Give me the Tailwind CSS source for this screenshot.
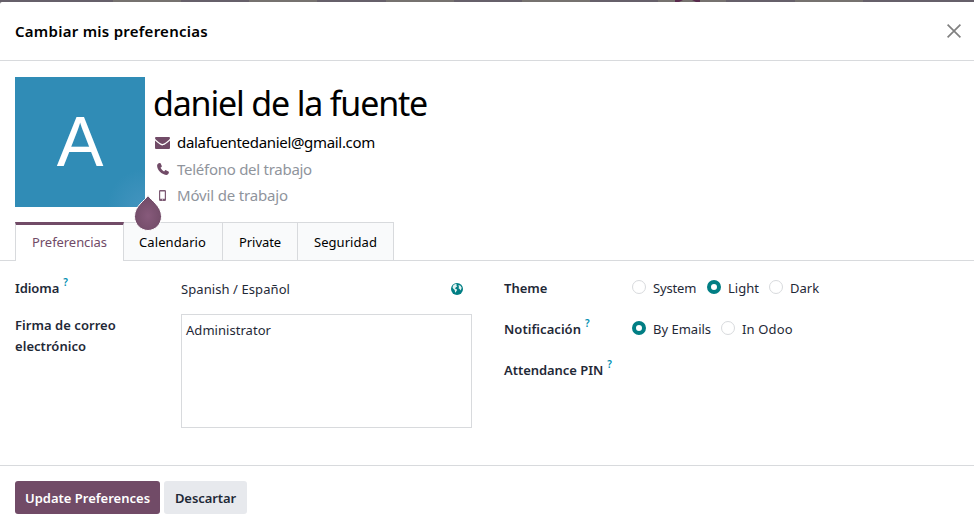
<!DOCTYPE html>
<html lang="es">
<head>
<meta charset="utf-8">
<title>Cambiar mis preferencias</title>
<script src="https://cdn.jsdelivr.net/npm/@tailwindcss/browser@4"></script>
</head>
<body class="w-[974px] h-[528px] overflow-hidden bg-[#66626a] font-['Noto_Sans','Open_Sans',sans-serif] text-[13px] leading-[21px] text-[#1f2937]">
<!-- Dimmed backdrop behind the dialog -->
<div class="flex h-0.5 bg-[#66606a]">
  <div class="w-[113px]"></div><div class="w-[68px] bg-[#76726f]"></div>
  <div class="w-[68px]"></div><div class="w-[68px] bg-[#76726f]"></div>
  <div class="w-[69px]"></div><div class="w-[68px] bg-[#76726f]"></div>
  <div class="w-[68px]"></div><div class="w-[68px] bg-[#76726f]"></div>
  <div class="w-[68px]"></div>
  <div class="w-[68px] bg-[#76726f] flex justify-center pr-[9px]"><svg class="w-[25px] h-0.5" viewBox="0 0 25 2"><path d="M0 2V0H8L4 2ZM25 2V0H17L21 2Z" fill="#592a4d"/></svg></div>
  <div class="w-[69px]"></div><div class="w-[68px] bg-[#76726f]"></div>
</div>
<div class="flex flex-col h-[526px] bg-white rounded-tl-[2px]">
  <header class="flex h-[59px] shrink-0 items-center justify-between border-b border-[#d8dadd] pl-[15px] pr-[13px]">
    <h1 class="text-[15px] font-semibold tracking-[0.26px] text-black">Cambiar mis preferencias</h1>
    <svg class="w-[14px] h-[14px]" viewBox="0 0 14 14" fill="none" stroke="#808080" stroke-width="1.7"><path d="M.6.6 13.4 13.4M13.4.6.6 13.4"/></svg>
  </header>

  <main class="flex-1">
    <section class="flex h-[161px] pl-[15px] pt-4">
      <div class="relative flex w-[130px] h-[130px] items-center justify-center bg-[radial-gradient(circle_at_bottom_right,#4494bf_0,#308cb6_38px)] shrink-0">
        <span class="text-[70px] leading-[130px] text-white font-['Liberation_Sans','Noto_Sans',sans-serif]">A</span>
        <svg class="absolute left-[118px] top-[117px] w-[30px] h-[38px] z-10" viewBox="0 0 30 38">
          <defs><radialGradient id="drop" cx=".5" cy=".58" r=".55"><stop stop-color="#875a7b"/><stop offset="1" stop-color="#714b67"/></radialGradient></defs>
          <path d="M15 1.500C18 6.500 28.500 12 28.500 22.500C28.500 30.500 22 36.500 15 36.500S1.500 30.500 1.500 22.500C1.500 12 12 6.500 15 1.500Z" fill="url(#drop)" stroke="#fff" stroke-width="1"/>
        </svg>
      </div>
      <div class="pl-[8px] text-[15px]">
        <div class="h-[52px] text-[34px] leading-[53px] tracking-[-1.18px] text-black whitespace-nowrap">daniel de la fuente</div>
        <div class="flex h-[27px] items-center">
          <svg class="ml-[2px] mr-[7px] w-[15px] h-3" viewBox="0 0 15 12"><path d="M1 0H14Q15 0 15 1.300C15 2.500 9.500 7 7.500 7S0 2.500 0 1.300Q0 0 1 0ZM0 3.500C4 7 6 8.400 7.500 8.400S11 7 15 3.500V11Q15 12 14 12H1Q0 12 0 11Z" fill="#714b67"/></svg>
          <span class="tracking-[-0.32px] text-black">dalafuentedaniel@gmail.com</span>
        </div>
        <div class="flex h-[26px] items-center">
          <svg class="ml-1 mr-2 w-3 h-3" viewBox="0 0 12 12"><path d="M2.800.1Q3.500-.1 3.800.7L4.800 3Q5 3.500 4.500 3.900L3.500 4.800Q4.800 7.300 7.100 8.500L8.100 7.300Q8.500 6.900 9 7.200L11.500 8.500Q12 8.800 11.900 9.400C11.600 11 10.600 12 9.100 11.900C4.500 11.600.300 7 .1 3.100C0 1.400.9.400 2.800.1Z" fill="#714b67"/></svg>
          <span class="tracking-[-0.27px] text-[#8f949c]">Teléfono del trabajo</span>
        </div>
        <div class="flex h-[27px] items-center">
          <svg class="ml-[6px] mr-[11px] w-[7px] h-[11px]" viewBox="0 0 7 11"><path d="M1.200 0H5.800Q7 0 7 1.200V9.800Q7 11 5.800 11H1.200Q0 11 0 9.800V1.200Q0 0 1.200 0ZM1.200 1.500V8.800H5.800V1.500ZM3 9.500V10.300H4V9.500Z" fill="#7d5a74" fill-rule="evenodd"/></svg>
          <span class="tracking-[-0.16px] text-[#8f949c]">Móvil de trabajo</span>
        </div>
      </div>
    </section>

    <nav class="flex h-[39px] border-b border-[#d8dadd] pl-[15px] text-black">
      <div class="h-[39px] w-[109px] border-x border-t-3 border-x-[#d8dadd] border-t-[#714b67] bg-white pl-4 pt-[7px] text-[#714b67] tracking-[-0.06px]">Preferencias</div>
      <div class="w-[99px] border-t border-r border-[#d8dadd] bg-[#f9fafb] pl-[15px] pt-[9px] tracking-[0.09px]">Calendario</div>
      <div class="w-[75px] border-t border-r border-[#d8dadd] bg-[#f9fafb] pl-4 pt-[9px] tracking-[-0.07px]">Private</div>
      <div class="w-[96px] border-t border-r border-[#d8dadd] bg-[#f9fafb] pl-4 pt-[9px] tracking-[0.05px]">Seguridad</div>
    </nav>

    <section class="flex pl-[15px] pt-[17px]">
      <div class="grid w-[457px] grid-cols-[166px_291px] grid-rows-[36px_114px] content-start">
        <div class="font-semibold tracking-[-0.1px]">Idioma<sup class="ml-1 text-[10px] top-[-7px] text-[#018fb2]">?</sup></div>
        <div class="flex justify-between pr-[9px] pt-px">
          <span class="tracking-[0.08px]">Spanish / Español</span>
          <svg class="mt-1 w-3 h-3" viewBox="0 0 12 12"><circle cx="6" cy="6" r="6" fill="#017e84"/><path d="M2.300 2.300 4.200 1.100 6 1.400 5.300 2.400 6.300 3.200 4.700 4.400 3.900 5.400 5.300 6 6.200 7.100 5.300 8.300 4.700 9.800 4 8.700 3.700 7 2.100 5.600 1.500 4.300ZM7.800 2 9.500 2.700 10.700 4.700 10.200 6.300 9.300 7.600 8.700 6.100 7.500 5.300 8.100 3.700 7.400 3Z" fill="#e3f2f1"/></svg>
        </div>
        <div class="pt-px font-semibold tracking-[0.05px]">Firma de correo<br>electrónico</div>
        <div class="border border-[#d8dadd] pl-1 pt-[5px] tracking-[0.04px]">Administrator</div>
      </div>
      <div class="ml-8 grid grid-cols-[128px_auto] auto-rows-[41px] content-start">
        <div class="font-semibold">Theme</div>
        <div class="flex">
          <i class="mt-0.5 mr-[7px] size-3.5 rounded-full border border-[#d8dadd]"></i><span class="w-[54px] tracking-[-0.15px]">System</span>
          <i class="mt-0.5 mr-[7px] size-3.5 rounded-full border-4 border-[#017e84]"></i><span class="w-[41px]">Light</span>
          <i class="mt-0.5 mr-[7px] size-3.5 rounded-full border border-[#d8dadd]"></i><span>Dark</span>
        </div>
        <div class="font-semibold tracking-[0.05px]">Notificación<sup class="ml-1 text-[10px] top-[-7px] text-[#018fb2]">?</sup></div>
        <div class="flex">
          <i class="mt-0.5 mr-[7px] size-3.5 rounded-full border-4 border-[#017e84]"></i><span class="w-[68px]">By Emails</span>
          <i class="mt-0.5 mr-[7px] size-3.5 rounded-full border border-[#d8dadd]"></i><span class="tracking-[0.15px]">In Odoo</span>
        </div>
        <div class="font-semibold tracking-[-0.05px]">Attendance PIN<sup class="ml-1 text-[10px] top-[-7px] text-[#018fb2]">?</sup></div>
      </div>
    </section>
  </main>

  <footer class="flex h-[63px] shrink-0 gap-1 border-t border-[#d8dadd] pl-[15px] pt-[15px] font-semibold">
    <button class="h-[33px] w-[145px] rounded-[3px] bg-[#714b67] pt-0.5 text-white">Update Preferences</button>
    <button class="h-[33px] w-[83px] rounded-[3px] bg-[#e7e9ed] pt-0.5 tracking-[-0.08px] text-[#1f2937]">Descartar</button>
  </footer>
</div>
</body>
</html>
